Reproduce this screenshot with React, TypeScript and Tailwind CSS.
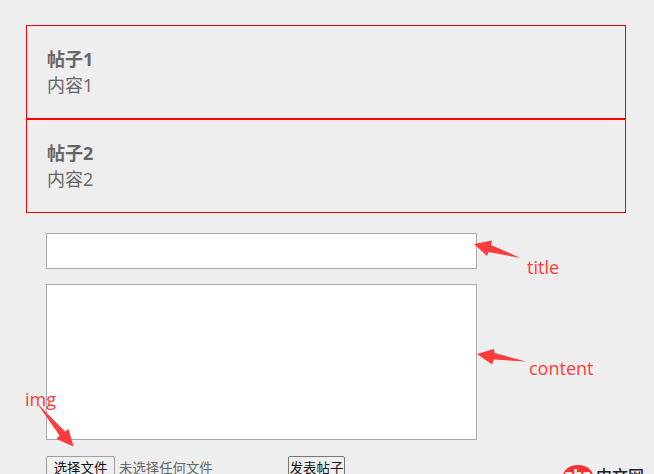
const FONT = "font-['Open_Sans','Noto_Sans_CJK_SC',sans-serif]";

const POSTS = [
  { id: 1, title: "帖子1", content: "内容1" },
  { id: 2, title: "帖子2", content: "内容2" },
];

function Annotations() {
  return (
    <>
      <svg className="absolute left-0 top-0" width="654" height="474" viewBox="0 0 654 474">
        <polygon points="474,244 492,240.5 491,245 520.5,258 488.5,252 487,256" fill="#ff3b3b" />
        <polygon points="477,354 494,349 494.5,353 526,361.5 494,359.5 492,364.5" fill="#ff3b3b" />
        <polygon points="36.5,402.5 65,431.5 68.5,429 73.5,446.5 56.5,439 59.5,435.5" fill="#ff3b3b" />
      </svg>
      <span className="absolute left-[527px] top-[255px] text-[18px] leading-[24px] text-[#ff3b3b]">title</span>
      <span className="absolute left-[529px] top-[356px] text-[18px] leading-[24px] text-[#ff3b3b]">content</span>
      <span className="absolute left-[25px] top-[387px] text-[18px] leading-[24px] text-[#ff3b3b]">img</span>
    </>
  );
}

function Watermark() {
  return (
    <div className="absolute left-[563px] top-[465px] flex items-center gap-[3px]">
      <div className="flex h-[22px] w-[30px] items-center justify-center rounded-[50%] bg-[#f03535] pb-[3px] text-[14px] font-bold leading-[18px] text-white">
        php
      </div>
      <span className="text-[16px] font-medium leading-[22px] text-[#222]">中文网</span>
    </div>
  );
}

export default function App() {
  return (
    <div className={`relative h-[474px] w-[654px] overflow-hidden bg-[#eeeeee] ${FONT}`}>
      <div className="ml-[26px] w-[600px] pt-[25px]">
        {POSTS.map((post) => (
          <div key={post.id} className="h-[94px] border border-[#ff0000] px-[20px] pt-[20px] text-[18px] leading-[26px] text-[#666666]">
            <h3 className="font-bold">{post.title}</h3>
            <p>{post.content}</p>
          </div>
        ))}
      </div>

      <div className="ml-[46px] mt-[20px] flex flex-col">
        <input type="text" className="h-[36px] w-[431px] border border-[#a9a9a9] bg-white" />
        <textarea className="mt-[15px] h-[156px] w-[431px] resize-none border border-[#a9a9a9] bg-white" />
        <div className="mt-[16px] flex items-start">
          <div className="flex w-[242px] items-center">
            <button className="h-[24px] w-[69px] rounded-[2px] border border-[#a0a0a0] bg-[#efefef] text-[13.4px] text-[#111]">
              选择文件
            </button>
            <span className="ml-[4px] text-[13.4px] text-[#666666]">未选择任何文件</span>
          </div>
          <button className="h-[24px] w-[57px] rounded-[2px] border border-[#767676] bg-[#efefef] text-[13.4px] text-[#111]">
            发表帖子
          </button>
        </div>
      </div>

      <Annotations />
      <Watermark />
    </div>
  );
}
